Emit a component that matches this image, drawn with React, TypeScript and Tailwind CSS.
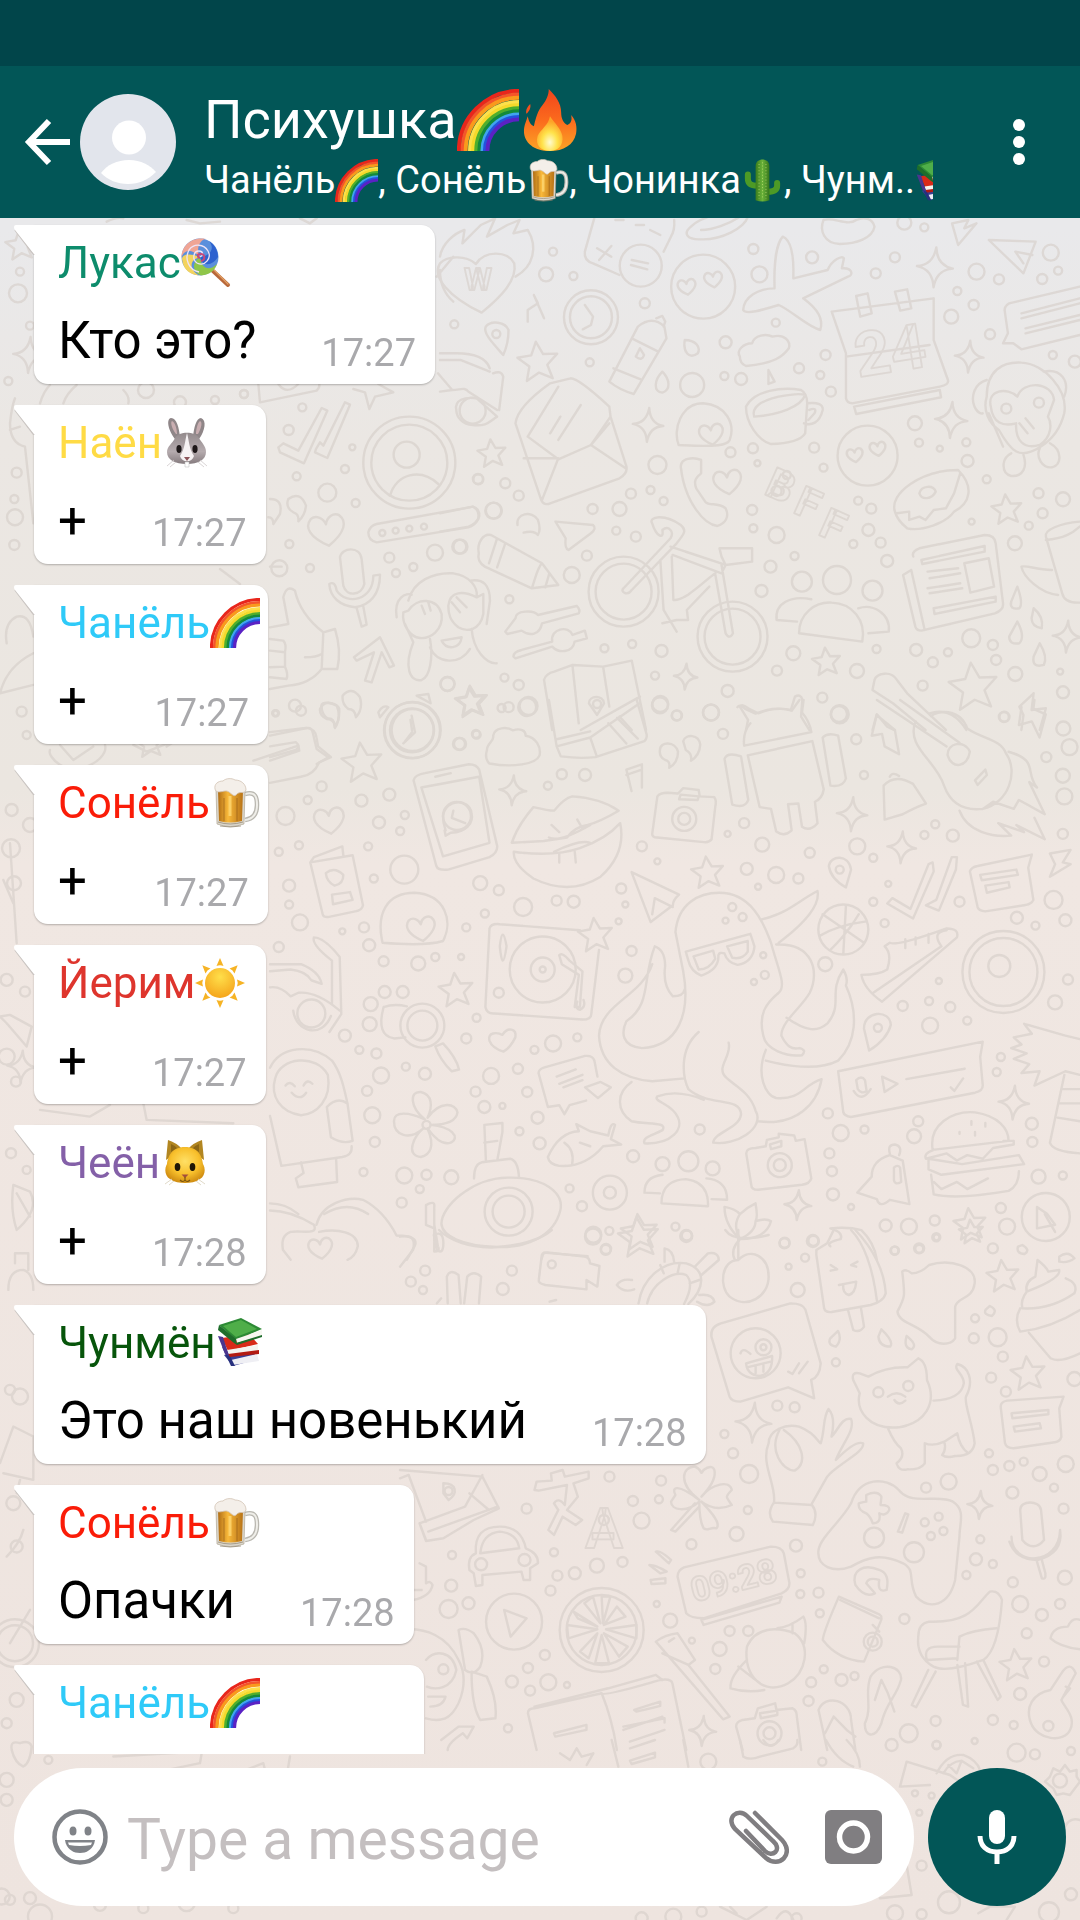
import type { ReactNode } from "react";

type EmojiName =
  | "rainbow"
  | "fire"
  | "beer"
  | "cactus"
  | "books"
  | "lollipop"
  | "rabbit"
  | "sun"
  | "cat";

interface Message {
  id: number;
  author: string;
  emoji: EmojiName;
  color: string;
  text: string;
  time: string;
  width?: string;
}

const messages: Message[] = [
  { id: 1, author: "Лукас", emoji: "lollipop", color: "text-[#0d8c6c]", text: "Кто это?", time: "17:27" },
  { id: 2, author: "Наён", emoji: "rabbit", color: "text-[#ffdb45]", text: "+", time: "17:27" },
  { id: 3, author: "Чанёль", emoji: "rainbow", color: "text-[#2fcaf8]", text: "+", time: "17:27" },
  { id: 4, author: "Сонёль", emoji: "beer", color: "text-[#fa1c08]", text: "+", time: "17:27" },
  { id: 5, author: "Йерим", emoji: "sun", color: "text-[#de352d]", text: "+", time: "17:27" },
  { id: 6, author: "Чеён", emoji: "cat", color: "text-[#8460a8]", text: "+", time: "17:28" },
  { id: 7, author: "Чунмён", emoji: "books", color: "text-[#07550b]", text: "Это наш новенький", time: "17:28" },
  { id: 8, author: "Сонёль", emoji: "beer", color: "text-[#fa1c08]", text: "Опачки", time: "17:28" },
  { id: 9, author: "Чанёль", emoji: "rainbow", color: "text-[#2fcaf8]", text: "", time: "", width: "w-[390px]" },
];

const rainbowBands = [
  ["#e8261c", 48.5],
  ["#f4552a", 45.5],
  ["#f99a1c", 43],
  ["#fde04a", 39.5],
  ["#f5d92b", 37],
  ["#4fae2c", 34.5],
  ["#138a3a", 32],
  ["#3fa4ee", 29.5],
  ["#2352dc", 27.5],
  ["#5a22c4", 25.5],
] as const;

const emojiArt: Record<EmojiName, ReactNode> = {
  rainbow: (
    <g fill="none" strokeWidth="3.2">
      {rainbowBands.map(([color, r]) => (
        <path key={color} stroke={color} d={`M${50 - r} 50A${r} ${r} 0 0 1 50 ${50 - r}`} />
      ))}
    </g>
  ),
  fire: (
    <>
      <path
        fill="url(#flame)"
        d="M24 0C29 5 34 11 34 19C34 24 36 28 39 29C42 28 43 25 42 21C46 25 47 31 46 36C44 45 36 50 25 50C12 50 4 43 4 34C4 29 6 26 7 22C8 26 9 29 12 30C14 22 15 18 19 13C22 9 24 5 24 0Z"
      />
      <path fill="#f4511e" d="M9 12C7 14 5 17 6 20C8 18 10 15 9 12Z" />
      <path
        fill="url(#flameCore)"
        d="M25 22C29 28 34 32 35 38C36 45 32 50 25 50C17 50 13 45 15 38C17 33 24 29 25 22Z"
      />
    </>
  ),
  beer: (
    <>
      <path
        d="M35 16C46 13 47 20 47 27C47 36 43 41 35 42"
        fill="none"
        stroke="#b9b7b0"
        strokeWidth="4.5"
      />
      <path
        d="M35 16C46 13 47 20 47 27C47 36 43 41 35 42"
        fill="none"
        stroke="#efeee9"
        strokeWidth="2"
      />
      <path fill="#dcd7cc" stroke="#a49a86" strokeWidth=".6" d="M6 12L7 46Q20 51 34 46L35 12Z" />
      <path fill="url(#lager)" d="M8 12L9 43Q20 46 32 43L33 12Z" />
      <path stroke="#ffd873" strokeWidth="3" d="M20 18V38" opacity=".8" />
      <path stroke="#7b4710" strokeWidth=".8" d="M14 20V43M27 20V43" opacity=".6" />
      <path
        fill="#f4efe9"
        stroke="#d2c3b4"
        strokeWidth=".8"
        d="M5 11C4 6 8 3 13 3C16 0 22 0 25 2C31 2 36 6 36 12C34 17 30 12 26 17C23 20 20 12 15 13C10 14 6 15 5 11Z"
      />
      <path stroke="#8d8069" strokeWidth=".7" fill="none" d="M8 44Q20 48 33 44M10 48Q20 50 31 48" />
    </>
  ),
  cactus: (
    <>
      <path
        d="M8 18V23C8 29 12 31 19 31M42 28V31C42 36 38 38 31 38"
        fill="none"
        stroke="#4d9a26"
        strokeWidth="7"
        strokeLinecap="round"
      />
      <path fill="url(#cactusBody)" d="M17 48V8C17 -2 33 -2 33 8V48Q25 51 17 48Z" />
      <path
        d="M21 6V46M25 4V47M29 6V46"
        fill="none"
        stroke="#bfdc73"
        strokeWidth="1"
        strokeDasharray="1 2.6"
      />
    </>
  ),
  books: (
    <>
      <path fill="#3a3f94" d="M8 37L34 30L42 41L17 48Z" />
      <path fill="#efeff4" d="M15 42L41 36L43 43L17 47Z" />
      <path fill="#27307e" d="M6 29L10 30L19 48L15 48Z" />
      <path fill="#d92a19" d="M6 20L33 16L42 26L12 33Z" />
      <path fill="#f5f3ef" d="M11 32L42 27V33L13 37Z" />
      <path fill="#b31b12" d="M12 36L43 32V36L14 39Z" />
      <path fill="#4b358f" d="M2 18L7 19L13 38L9 36Z" />
      <path fill="#2d8a35" d="M3 7L25 0L46 11L20 22Z" />
      <path fill="#4fae49" d="M7 8L25 2L41 11L20 19Z" />
      <path fill="#f7f7f1" d="M20 21L46 12V18L21 25Z" />
      <path fill="#1e6d2b" d="M3 7L20 21L21 27L18 25L2 12Z" />
      <path fill="#1e6d2b" d="M20 25L46 17V19L21 27Z" />
    </>
  ),
  lollipop: (
    <>
      <path stroke="#b8683a" strokeWidth="4" strokeLinecap="round" d="M32 33L47 47" />
      <path stroke="#e2a063" strokeWidth="1.2" strokeLinecap="round" d="M33 32L47 46" />
      <circle cx="19" cy="19" r="18.5" fill="#5b8fdc" />
      <path fill="#f0a595" d="M19 19C14 10 20 1 25 1C10 -2 0 9 .5 20C2 13 9 9 19 19Z" />
      <path fill="#f3d35e" d="M19 19C7 14 1 17 1 21C2 32 10 37 18 37.500C8 31 8 22 19 19Z" />
      <path fill="#8fc649" d="M19 19C10 25 12 34 20 37.500C29 37 34 32 36 26C28 34 20 30 19 19Z" />
      <path fill="#2d62cf" d="M19 19C22 30 32 27 37 19C37 12 33 6 28 3C34 10 30 18 19 19Z" />
      <path
        fill="none"
        stroke="#efe3f6"
        strokeWidth="1.300"
        d="M19 19C23 17 22 13 18 13C12 13 11 22 16 25C24 29 31 20 27 13C23 6 13 5 8 12C3 21 8 32 18 34"
      />
      <path fill="none" stroke="#c5487c" strokeWidth="2" d="M19 20C16 19 16 16 19 16C24 15 25 22 20 23" />
    </>
  ),
  rabbit: (
    <>
      <path fill="#8f8688" d="M13 21C6 12 4 1 9 0C15 0 17 10 18 19ZM31 19C32 10 34 0 39 0C45 2 43 13 37 21Z" />
      <path fill="#c9aeb1" d="M14 16C10 11 8 4 10 3C13 4 15 11 15 16ZM34 16C34 11 36 4 38 3C41 4 39 11 36 16Z" />
      <path
        fill="url(#fur)"
        d="M13 20C17 13 33 13 37 20C39 24 44 28 44 34C44 42 36 46 25 46C13 46 5 42 5 34C5 28 11 25 13 20Z"
      />
      <path fill="#f6f2f3" d="M25 15C23 22 23 31 18 38C20 45 30 45 32 38C27 31 27 22 25 15Z" />
      <ellipse cx="17" cy="31" rx="2.600" ry="4" fill="#1d1718" />
      <ellipse cx="33" cy="31" rx="2.600" ry="4" fill="#1d1718" />
      <path fill="#8b5459" d="M22 39H28L25 43Z" />
      <path fill="#fff" stroke="#bbb" strokeWidth=".5" d="M23 44H27V49H23Z" />
      <path stroke="#cfc9ca" strokeWidth=".8" d="M5 48L12 42M8 49L14 44M45 48L38 42M42 49L36 44" />
    </>
  ),
  sun: (
    <>
      <g fill="#f6b324">
        {[0, 45, 90, 135, 180, 225, 270, 315].map((angle) => (
          <path key={angle} d="M25 0L28.500 8Q25 6.500 21.500 8Z" transform={`rotate(${angle} 25 25)`} />
        ))}
      </g>
      <circle cx="25" cy="25" r="15" fill="url(#sunDisc)" />
    </>
  ),
  cat: (
    <>
      <path fill="#b28621" d="M6 22L8 2Q17 5 22 11ZM44 22L42 2Q33 5 28 11Z" />
      <path fill="#8d6714" d="M11 14L11 6Q16 8 18 11ZM39 14L39 6Q34 8 32 11Z" />
      <path
        fill="url(#catFace)"
        d="M25 9C38 9 42 18 43 26C46 31 45 38 40 41C36 44 30 45 25 45C20 45 14 44 10 41C5 38 4 31 7 26C8 18 12 9 25 9Z"
      />
      <ellipse cx="17.500" cy="29" rx="2.800" ry="4" fill="#1e1606" />
      <ellipse cx="32.500" cy="29" rx="2.800" ry="4" fill="#1e1606" />
      <path fill="#a34e3c" d="M21.500 36.500H28.500L25 40Z" />
      <path fill="none" stroke="#7a5510" strokeWidth="1.200" d="M25 39V42M20 42Q23 45 25 42Q27 45 30 42" />
      <path stroke="#ddd6c2" strokeWidth=".9" d="M5 46L12 41M9 47L14 43M45 46L38 41M41 47L36 43" />
    </>
  ),
};

function Emoji({ name, className }: { name: EmojiName; className: string }) {
  return (
    <svg viewBox="0 0 50 50" aria-hidden="true" className={`shrink-0 ${className}`}>
      {emojiArt[name]}
    </svg>
  );
}

function EmojiPaint() {
  return (
    <svg aria-hidden="true" className="absolute size-0">
      <defs>
        <linearGradient id="flame" x1="0" y1="0" x2="0" y2="1">
          <stop offset="0" stopColor="#f0441c" />
          <stop offset=".5" stopColor="#fb6a1d" />
          <stop offset="1" stopColor="#fba426" />
        </linearGradient>
        <radialGradient id="flameCore" cx=".5" cy=".75" r=".6">
          <stop offset="0" stopColor="#fffbd0" />
          <stop offset=".5" stopColor="#ffe24a" />
          <stop offset="1" stopColor="#fda328" />
        </radialGradient>
        <linearGradient id="lager">
          <stop offset="0" stopColor="#b06d14" />
          <stop offset=".4" stopColor="#f8b83a" />
          <stop offset="1" stopColor="#b87317" />
        </linearGradient>
        <linearGradient id="cactusBody">
          <stop offset="0" stopColor="#3b7d1d" />
          <stop offset=".5" stopColor="#6bb33a" />
          <stop offset="1" stopColor="#34751c" />
        </linearGradient>
        <linearGradient id="fur" x1="0" y1="0" x2="0" y2="1">
          <stop offset="0" stopColor="#938a8c" />
          <stop offset=".6" stopColor="#b5abae" />
          <stop offset="1" stopColor="#857b7e" />
        </linearGradient>
        <radialGradient id="sunDisc" cx=".5" cy=".3" r=".7">
          <stop offset="0" stopColor="#ffdf4a" />
          <stop offset="1" stopColor="#f5a51c" />
        </radialGradient>
        <radialGradient id="catFace" cx=".5" cy=".4" r=".6">
          <stop offset="0" stopColor="#ffe066" />
          <stop offset=".6" stopColor="#f8c02c" />
          <stop offset="1" stopColor="#d18e12" />
        </radialGradient>
      </defs>
    </svg>
  );
}

type Spot = [number, number, number];

interface DoodleSheet {
  x: number;
  y: number;
  sx: number;
  sy: number;
  // closed and open outlines, in the sheet's own units
  lines: string[];
  // x and y in sheet units, size in wallpaper units
  rings: Spot[];
  stars: Spot[];
  sparks: Spot[];
  hearts: Spot[];
}

const sheets: DoodleSheet[] = [
  {
    x: 440,
    y: 210,
    sx: 0.408,
    sy: 0.3333,
    lines: [
      "M0 160C-20 200 20 260 102 308C150 260 190 210 182 160C165 122 110 120 88 162C60 132 15 140 0 160Z",
      "M0 140C5 100 35 70 60 60L55 100L100 45L135 25L115 80L165 45L195 30L180 70L215 60C240 110 230 170 185 200",
      "M378 25L355 125Q352 152 375 160L440 195M574 30Q576 60 566 80L548 125M430 30H450M480 45H500M515 60L540 75M385 115L420 140M420 108L390 150",
      "M470 150L510 160M468 165L508 178",
      "M615 50C640 20 700 0 755 20C745 55 690 90 640 88C605 90 595 70 615 50ZM640 60C670 60 710 40 735 20",
      "M940 30C930 60 940 100 980 102C1020 102 1060 85 1065 50C1060 25 1040 20 1020 30C1000 50 965 20 940 30Z",
      "M840 80C860 90 868 130 866 205L950 180C960 150 985 135 990 145L985 175C1010 172 1015 195 1000 200L890 265C930 300 940 330 932 360C900 350 860 300 830 285C790 300 750 315 743 300C745 260 780 235 820 235C818 160 825 100 840 80Z",
      "M960 305L1210 265V390L1245 510Q1248 525 1225 530L1010 580Q998 580 995 565V430ZM1020 258L1048 250L1058 310L1030 320ZM1115 245L1145 238L1155 295L1128 302ZM995 440L1200 405M1015 590L1225 540L1228 562L1020 612Z",
      "M1345 90L1460 95L1430 190ZM1430 160L1410 125L1452 135",
      "M1568 230L1395 280Q1380 290 1385 310L1392 370L1380 400L1405 400L1425 418L1568 375M1425 310L1568 265M1425 325L1568 280M1435 355L1568 315M1435 370L1568 330",
      "M230 255L240 280L215 300V335M230 255L255 325",
      "M155 435C130 400 105 370 112 350C125 330 160 335 168 360Q168 400 155 435Z",
      "M355 285L375 320L370 345L350 358",
      "M415 515L485 350Q520 315 550 350L555 385L475 552Q440 540 415 515ZM425 475L495 510M470 385L535 425M530 325L545 318L552 335L548 350M490 415L480 440Q495 455 500 435Z",
      "M600 390C625 390 640 410 632 430C610 450 595 425 600 390ZM545 485C565 510 565 540 545 548C522 545 525 510 545 485ZM805 480L820 515L805 522Z",
      "M735 440C725 420 745 400 765 400C770 375 800 370 815 380C845 370 860 395 855 415C840 440 820 460 750 468Q735 460 735 440Z",
      "M0 430H40C90 430 115 450 122 475M0 450H50L122 485M-5 490L30 540C50 540 60 530 70 545L140 600M0 545L30 540M40 600C35 570 60 560 90 565L140 620C120 635 115 650 80 645C55 645 40 620 40 600ZM130 490Q150 480 155 500L145 600",
      "M185 640Q190 590 270 520L320 505Q340 505 415 590L418 620L457 770Q460 790 440 805L270 880Q255 888 248 870ZM290 530L215 680L290 748L370 705L418 620M205 745H290L250 870M290 748L370 705L455 775M345 585L290 690M295 620L270 670M415 640L370 705",
      "M585 705C570 660 590 580 645 580C700 585 725 640 710 690C705 705 680 712 585 705Z",
      "M750 590C770 540 840 530 885 540Q900 550 900 580L895 670Q880 700 810 702C780 690 750 640 750 590ZM770 620Q760 580 830 560Q880 548 895 555C885 590 830 615 770 620ZM900 580Q940 575 938 600C930 640 910 648 892 640M905 600Q925 590 918 610L903 630",
      "M590 770C590 745 620 740 640 750V790C630 800 620 810 628 835L650 875C660 890 680 875 700 895C710 920 700 940 680 948C650 945 600 880 590 770Z",
      "M1340 560C1340 480 1380 455 1425 458C1480 460 1540 540 1530 610C1520 660 1500 690 1470 712C1420 750 1400 725 1370 660C1345 640 1330 600 1340 560ZM1350 590C1340 540 1390 530 1415 560C1430 510 1500 515 1505 570L1490 620C1500 640 1500 680 1470 705C1430 720 1410 690 1412 640C1380 650 1355 640 1350 590ZM1340 510C1310 520 1300 560 1310 590C1320 615 1330 610 1330 610M1480 485C1520 475 1545 510 1530 560M1345 610L1380 710M1400 730C1375 745 1375 790 1400 798C1430 800 1440 770 1430 735M1470 715C1460 740 1475 775 1500 772C1525 765 1525 720 1495 700M1420 640L1440 670M1435 625L1455 655",
      "M1115 905C1100 850 1180 780 1270 780C1310 830 1300 880 1260 905C1240 940 1180 965 1145 955Q1120 930 1115 905ZM1120 910L1150 905V930L1175 920L1190 930L1210 900L1240 895L1260 850L1275 790M1175 850C1180 825 1210 825 1215 845C1205 870 1180 870 1175 850Z",
      "M283 935L375 945Q385 955 370 970L315 1020Q305 1015 308 985Z",
      "M190 945C185 910 225 900 240 930Q248 960 240 975Q230 960 205 968",
      "M0 910L80 890Q98 895 96 920Q90 940 70 950L0 965",
      "M95 1030C90 1000 105 970 125 975L250 1060L290 1125L225 1135L110 1070Q90 1055 95 1030ZM120 1060L140 985M140 1072L160 1000M225 1135C235 1100 240 1070 250 1060M268 1090L258 1132",
      "M520 940C510 920 550 910 590 945C605 960 600 970 580 1000L470 1140C460 1160 440 1145 450 1135L565 985C575 965 560 945 545 960C550 990 530 980 520 940ZM565 1010L700 1065L690 1090L570 1035M568 1040L572 1170C600 1175 650 1110 675 1090M540 1050L548 1200L580 1265M685 1015L765 1015V1055L700 1065L690 1040ZM690 1065L718 1270Q710 1290 700 1270L675 1095M660 1130L605 1200L608 1230L580 1230L545 1240",
      "M825 1230C820 1180 860 1155 910 1168M825 1230L875 1235M1025 1195C1060 1180 1105 1210 1100 1265L1050 1270M880 1270C880 1210 920 1175 960 1178C1010 1180 1045 1230 1035 1295Z",
      "M1160 1040Q1155 1025 1175 1015L1335 975Q1360 975 1362 1000L1380 1180Q1382 1200 1360 1210L1180 1262Q1168 1262 1165 1250L1135 1095L1155 1080M1180 1050L1335 1008V1025L1182 1062ZM1285 1060L1345 1045L1358 1130L1300 1148ZM1195 1085L1270 1075M1200 1105L1275 1090M1195 1135L1275 1120M1200 1150L1280 1135M1210 1195L1362 1160V1175L1212 1212ZM1155 1080L1188 1260",
      "M1568 935C1520 940 1480 960 1485 980L1525 1150Q1530 1180 1568 1178M1485 990C1530 985 1550 970 1568 950M1500 1080C1460 1080 1440 1065 1425 1070C1430 1100 1470 1150 1515 1155",
      "M1415 1130Q1430 1180 1420 1195Q1395 1200 1400 1175ZM1455 1195Q1480 1220 1475 1255Q1450 1250 1450 1225ZM1415 1235Q1435 1280 1420 1300Q1395 1305 1395 1280ZM1470 1300Q1490 1340 1480 1365Q1450 1375 1455 1340Z",
      "M160 1265L185 1225C185 1200 230 1200 240 1215L335 1188Q345 1200 340 1210L250 1240C245 1275 220 1280 200 1262L165 1272ZM180 1340Q180 1325 200 1320L275 1295C270 1255 315 1245 325 1275L355 1262L360 1285L330 1295C325 1330 290 1330 275 1310L185 1345Z",
      "M275 1560L255 1410Q260 1390 280 1385L325 1365L400 1370L470 1352L505 1560M325 1370L340 1540M400 1372L415 1490M365 1480C365 1455 400 1455 402 1480L385 1515ZM345 1560L490 1460M440 1520L470 1560",
      "M750 1560L755 1530L735 1490Q740 1480 755 1495L780 1510Q820 1490 860 1500L870 1460Q885 1450 888 1470L885 1520L905 1560",
      "M1065 1410C1070 1390 1105 1380 1120 1410L1145 1450L1240 1560M1065 1410L1060 1440L1110 1480L1190 1560M1060 1560L1070 1515L1115 1560M1200 1510C1240 1495 1270 1520 1290 1560",
      "M1455 1450L1420 1490L1430 1515L1425 1560M1455 1450L1450 1500L1485 1495L1470 1560",
      "M1270 105L1315 40L1285 55L1295 30L1255 40Z",
    ],
    rings: [
      [492, 167, 21], [645, 230, 32], [370, 322, 27], [370, 322, 21], [1048, 737, 30], [450, 1145, 35], [450, 1145, 28],
      [717, 1280, 35], [717, 1280, 28], [887, 1115, 10], [973, 1110, 14], [1060, 1142, 10], [618, 525, 12], [138, 372, 4],
      [80, 602, 13], [1388, 596, 5], [1468, 578, 5], [825, 843, 5], [850, 795, 4], [385, 1482, 4],
      [277, 125, 4], [260, 193, 7], [327, 198, 4], [768, 117, 5], [783, 193, 8], [912, 142, 6], [1115, 142, 5],
      [1068, 190, 5], [1138, 38, 7], [1187, 52, 4], [1315, 185, 8], [1370, 208, 5], [1497, 128, 8], [1515, 182, 4],
      [1476, 207, 5], [1268, 243, 4], [1308, 285, 5], [1253, 320, 7], [1348, 373, 5], [502, 280, 5], [35, 343, 4],
      [823, 338, 4], [700, 397, 6], [367, 457, 4], [697, 498, 4], [738, 507, 6], [945, 435, 5], [880, 475, 5],
      [932, 495, 4], [958, 545, 5], [1502, 435, 4], [1556, 455, 6], [1164, 640, 7], [1174, 698, 4], [1225, 716, 3],
      [1290, 697, 4], [1293, 753, 6], [1340, 808, 4], [917, 713, 5], [767, 715, 5], [712, 727, 5], [533, 765, 9],
      [778, 760, 3], [940, 773, 4], [93, 807, 5], [160, 820, 5], [193, 857, 5], [468, 851, 5], [516, 840, 4],
      [548, 873, 4], [440, 897, 7], [374, 897, 5], [132, 902, 8], [765, 900, 5], [768, 955, 4], [825, 975, 8],
      [1025, 872, 4], [1057, 896, 5], [1050, 960, 6], [1080, 998, 5], [1013, 1002, 4], [1096, 1053, 6], [432, 962, 4],
      [480, 980, 5], [360, 1037, 5], [50, 1010, 7], [323, 1095, 8], [170, 1168, 4], [869, 1038, 4], [810, 1070, 6],
      [788, 1143, 6], [1467, 850, 5], [1527, 868, 7], [1477, 910, 5], [1443, 947, 4], [1303, 935, 3], [1409, 1000, 7],
      [1302, 1285, 9], [1355, 1305, 5], [1363, 1350, 5], [1245, 1327, 4], [1167, 1320, 6], [1208, 1357, 5],
      [1070, 1317, 4], [1022, 1383, 7], [866, 1330, 7], [826, 1382, 5], [543, 1323, 6], [471, 1302, 4], [403, 1315, 4],
      [527, 1397, 4], [158, 1403, 4], [193, 1425, 5], [18, 1422, 7], [217, 1488, 9], [151, 1494, 4], [705, 1443, 6],
      [540, 1482, 8], [580, 1517, 5], [664, 1508, 8], [937, 1463, 5], [978, 1512, 8], [1183, 1427, 5], [1410, 1392, 7],
      [1520, 1385, 3], [1527, 1447, 6], [1382, 1521, 5],
    ],
    stars: [[240, 455, 20], [127, 730, 14], [1389, 898, 15], [947, 1355, 14], [1307, 1430, 24], [77, 1475, 16]],
    sparks: [[1213, 172, 20], [1297, 440, 16], [1253, 630, 18], [510, 645, 17], [1537, 1280, 16], [602, 1400, 13]],
    hearts: [[605, 230, 9], [670, 208, 9], [665, 672, 12], [705, 815, 14], [1017, 735, 8], [1073, 716, 8]],
  },
  {
    x: 270,
    y: 700,
    sx: 0.5165,
    sy: 0.357,
    lines: [
      "M0 90L70 78Q88 80 90 105L93 130L118 160L95 175Q85 210 60 215L0 232M0 130L50 118Q60 130 50 140L0 160",
      "M275 85L272 55M275 90L262 115",
      "M100 20C95 0 130 5 134 25Q135 60 125 75Q125 50 112 52Q100 40 100 20ZM755 140C755 115 785 115 790 145Q790 175 773 190Q775 170 765 168Q753 160 755 140ZM800 115C805 95 830 95 833 125Q832 155 815 170Q818 150 805 140Z",
      "M420 140C420 120 435 115 432 100C435 75 460 75 470 85C485 78 495 85 495 100C515 105 525 130 522 155C515 180 470 190 425 178Q415 165 420 140Z",
      "M540 0L555 130L563 158Q600 165 630 160L725 115Q732 105 728 90L710 0M555 130L620 105L715 10M555 110L620 88M620 105L632 155M655 65L690 122M672 50L712 108",
      "M905 20Q910 10 920 25L940 38Q980 15 1010 30L1025 0M930 65Q915 90 918 128L1048 90Q1045 60 1030 35L1033 0M925 155L1050 115L1072 250Q1070 275 1055 285L1060 345Q1045 370 1030 355L1023 290L1003 292L1010 365Q995 385 980 368L970 305L948 300ZM880 165Q885 145 912 158L926 280Q920 305 895 293ZM1070 105Q1080 90 1100 100L1115 220Q1110 245 1085 240Z",
      "M1175 0L1310 130M1220 0L1335 120M1175 40L1165 100L1185 95L1190 130L1218 152L1210 85L1195 75ZM1250 60C1230 130 1290 170 1305 240C1320 300 1350 310 1380 305C1430 290 1450 200 1425 150C1415 110 1380 110 1350 80C1335 20 1290 30 1280 45M1312 155C1310 120 1345 110 1355 145C1350 190 1320 195 1312 155ZM1365 225L1385 195L1388 210L1370 238ZM1430 145C1490 170 1460 200 1485 245L1470 230L1500 320L1450 280L1440 305L1400 285L1380 305M1335 310C1350 370 1400 385 1435 380L1410 345L1460 370L1445 350L1500 390L1480 330",
      "M1455 20L1450 70L1475 60L1490 105L1502 40L1478 25L1480 0",
      "M1190 335L1188 240Q1210 205 1245 235L1270 290Q1250 300 1225 320ZM1200 215Q1205 200 1218 213",
      "M278 225Q280 210 300 205L385 180Q400 180 405 195L440 410Q440 430 425 440L345 475Q325 478 322 465ZM293 245L405 215L425 400L335 438ZM338 365L340 380L350 372C380 370 395 345 390 315C385 275 340 275 335 325Q335 345 340 365M320 215L350 205M355 310L352 330L378 345",
      "M468 400Q480 350 510 300Q540 310 550 310Q570 275 585 270Q640 275 675 310Q640 340 615 350Q590 355 575 385L530 395ZM472 425Q550 440 600 415Q650 390 678 345Q690 430 640 495Q580 550 510 500Q470 460 472 425ZM545 350L560 370M595 335L605 360M560 430V455M590 425L592 455M540 385Q560 400 620 350M550 425Q600 390 620 400",
      "M740 375L750 270Q755 260 770 260L790 262L800 247L830 252L832 270L860 272Q865 280 862 300L855 390Q850 400 840 398L750 385Q740 385 740 375ZM795 265L830 270L828 280L792 278Z",
      "M690 195L720 180V245M690 195L700 255M690 210L720 195",
      "M78 455L160 435L180 575Q178 590 165 592L112 608Q103 608 102 600ZM78 455L85 440L140 410L142 435M120 545L155 538L160 560L122 572ZM108 485Q125 465 142 490Q142 515 125 520Q110 510 108 485Z",
      "M1355 480Q1358 468 1370 465L1475 433L1468 470L1478 560Q1475 572 1460 575L1385 592Q1372 590 1370 580ZM1375 490L1445 475L1448 490L1378 505ZM1385 520L1430 510L1432 525L1388 540Z",
      "M1195 570L1205 555L1240 585L1275 460L1283 455L1285 480L1245 612ZM1270 575L1290 560L1320 440L1330 440L1328 475L1295 590ZM1510 430L1550 420L1535 455L1550 460L1510 495L1520 460Z",
      "M700 482L792 545Q780 560 780 575L737 622ZM780 580L745 555L740 600",
      "M218 680C205 600 225 540 280 540C340 545 355 620 335 675Q300 690 218 680Z",
      "M425 640Q428 625 445 628L600 645M425 640L417 860Q420 880 435 878L605 895Q622 895 622 880L637 700M445 690Q450 625 458 690Q450 770 445 690ZM560 715Q565 705 580 730L605 760L600 860L590 860L598 770L565 740ZM595 845Q590 865 600 868Q612 860 607 840",
      "M785 650C790 570 830 540 870 540C930 540 955 620 970 680C985 760 1000 800 985 820C960 850 945 880 955 940C960 980 1000 1000 1030 995Q1040 980 1025 975C1010 980 1000 970 990 940C990 900 1030 860 1045 820C1065 760 1050 680 980 685M785 650L800 760C815 880 790 970 720 975C680 970 680 930 690 900C740 850 720 780 745 690Q765 700 765 745Q760 800 780 830Q800 830 803 810M740 740C720 830 640 850 637 940C640 1020 680 1060 740 1068L803 1060M1000 890C1040 930 1060 930 1080 905C1110 850 1080 820 1110 755Q1120 780 1115 800C1140 880 1135 960 1100 1010C1060 1040 1000 1025 960 1010M950 615C1000 600 1020 565 1060 535C1065 570 1040 620 985 680M960 980C940 1050 960 1110 980 1115C1030 1120 1030 1080 1068 1062C1060 1130 1020 1195 945 1180M830 930C790 980 800 1060 810 1090C850 1140 910 1110 912 1160C910 1200 860 1210 858 1240C900 1250 960 1200 940 1150C930 1100 900 1080 885 1060C860 1030 895 1000 888 960M700 1070C670 1100 670 1150 700 1180C730 1190 770 1180 760 1205C740 1220 720 1225 725 1242C780 1245 800 1200 790 1170C780 1130 740 1125 750 1110Q790 1090 840 1120",
      "M805 705L930 655L938 690Q935 735 905 742Q885 735 880 710Q870 705 868 715Q870 755 835 772Q815 760 810 730ZM820 718L858 702L862 725Q850 755 830 755ZM885 690L925 675L925 705Q915 728 895 722Z",
      "M1070 600L1150 680M1115 578L1110 710M1065 660Q1100 630 1155 620M1085 700Q1120 650 1140 600",
      "M1190 690L1200 680Q1215 690 1310 640Q1335 640 1330 665L1185 845Q1150 810 1145 770Q1180 770 1195 755Q1205 710 1190 690ZM1168 820L1300 690Q1280 650 1310 645M1230 695V670M1250 685V665M1275 680V655",
      "M1150 920C1150 870 1200 865 1202 910Q1195 950 1160 982ZM1082 465C1085 435 1120 430 1125 475L1115 525Q1085 500 1082 465Z",
      "M0 740H60Q95 760 100 795L80 785Q70 760 40 755L0 760M85 665Q105 665 135 720L138 880L115 930M85 665Q80 685 120 730V850M0 805Q20 800 40 830L55 820Q90 815 135 870M45 870C50 930 100 950 118 885",
      "M220 860Q240 850 265 858M220 860Q205 940 240 948L262 945M320 970L335 962Q360 1000 366 1035L352 1040Q330 1010 320 970Z",
      "M425 955C420 930 440 930 450 938C460 915 478 920 475 945Q465 975 452 985Q430 975 425 955Z",
      "M520 1045Q520 1035 530 1030L610 997Q625 995 628 1010L634 1055M520 1045L538 1140L560 1135L570 1160L580 1135L612 1122M555 1055L592 1035M560 1075L605 1050M568 1085L605 1065M610 1085L640 1070L660 1085L635 1115Z",
      "M1100 1040L1380 957L1375 1000L1380 1080Q1380 1095 1365 1100L1125 1168Q1112 1165 1110 1155ZM1185 1055L1215 1075L1190 1098ZM1232 1062L1345 1033M1135 1065Q1145 1050 1152 1065L1155 1095Q1145 1105 1138 1090ZM1130 1095Q1145 1130 1163 1090M1318 1085L1325 1095L1342 1060",
      "M1568 950L1540 940L1460 907L1475 935L1440 945L1455 965L1435 975L1465 990L1440 1005L1470 1020L1455 1045L1490 1040L1480 1080L1540 1040L1568 1050M1538 1050L1510 1240Q1515 1265 1568 1270M1535 1090H1568M1528 1130H1568M1525 1170L1568 1180",
      "M0 1030C20 970 80 960 120 1010C140 1050 145 1100 150 1130M10 1060C20 1000 90 990 112 1050C120 1120 90 1160 60 1163C20 1155 0 1110 10 1060ZM30 1080Q38 1065 48 1082M65 1080Q72 1060 82 1075M42 1100Q58 1125 70 1100M0 1165L22 1305L140 1280Q160 1275 158 1250M110 1140Q130 1110 150 1130L160 1235Q140 1245 118 1225ZM60 1295L65 1325L50 1340L55 1365L130 1350L128 1285",
      "M300 1175C270 1140 270 1095 292 1098C315 1105 315 1140 305 1170C330 1120 360 1130 363 1155C360 1185 330 1190 312 1190C350 1195 370 1225 350 1240C330 1250 310 1210 305 1200C320 1250 310 1275 292 1280C260 1275 280 1220 297 1200C270 1235 240 1220 240 1180C240 1150 270 1155 300 1175Z",
      "M415 1190L450 1185V1210L440 1290M415 1190L418 1290M395 1340Q395 1300 410 1295L465 1285Q480 1290 482 1335M415 1240L440 1235M332 1470C330 1420 390 1340 460 1338C530 1335 570 1380 562 1430C550 1500 500 1535 440 1532C370 1530 335 1500 332 1470ZM302 1415Q320 1400 318 1420L318 1470L325 1530Q330 1545 318 1545L318 1480L302 1470Z",
      "M538 1280Q560 1210 598 1208L593 1188L620 1208L655 1220Q660 1180 668 1190L660 1230L680 1245L645 1250Q610 1310 560 1305Q540 1300 538 1280ZM570 1240Q590 1260 585 1300M600 1240L620 1250",
      "M725 1380Q725 1335 760 1330M725 1380L755 1382M845 1340Q885 1345 885 1400L855 1398M758 1410Q758 1345 805 1342Q850 1350 848 1418Z",
      "M922 1270Q922 1255 940 1255L960 1250L962 1232L985 1225V1215L1015 1220L1018 1235L1035 1230L1048 1340Q1045 1355 1030 1358L945 1372Q932 1372 932 1360ZM968 1245L990 1235V1250L970 1258Z",
      "M1137 1380L1165 1335Q1165 1290 1200 1275L1225 1290L1238 1412L1200 1400Q1180 1425 1175 1398ZM1200 1270Q1195 1245 1210 1245Q1225 1250 1218 1275M1208 1310Q1215 1300 1220 1310L1222 1350Q1210 1360 1208 1345Z",
      "M1283 1260C1275 1190 1320 1150 1365 1155C1410 1165 1430 1200 1430 1235L1283 1260ZM1285 1260Q1265 1270 1270 1285L1310 1270L1330 1290L1350 1275L1380 1285L1400 1255L1440 1245V1235L1420 1235M1275 1285L1340 1300L1450 1275L1460 1300L1300 1330L1275 1315ZM1280 1330L1285 1385Q1330 1400 1430 1375Q1450 1360 1450 1320M1285 1350L1300 1370L1330 1350L1350 1370L1390 1340M1335 1210V1215M1358 1180V1190M1385 1185V1195M1365 1210V1220",
      "M0 1430Q40 1430 85 1470C95 1500 60 1485 40 1490Q20 1500 25 1540L40 1568M0 1410Q30 1410 55 1440M90 1470C100 1410 150 1390 180 1400Q220 1430 245 1500Q290 1500 280 1530L265 1568M105 1440Q150 1400 190 1440M95 1490C130 1480 170 1490 170 1530Q165 1560 150 1568",
      "M910 1510Q880 1470 880 1420Q900 1425 910 1440Q925 1420 940 1410Q945 1450 940 1460Q960 1450 970 1460Q960 1510 910 1510ZM910 1440Q895 1470 910 1510Q940 1490 940 1460M910 1510Q890 1540 900 1568",
      "M1085 1480Q1120 1475 1145 1485Q1170 1520 1175 1568M1085 1480Q1110 1490 1105 1510Q1075 1520 1085 1530",
      "M525 1568L530 1548L615 1558",
      "M1485 1480L1520 1470L1505 1440L1485 1420V1480M1500 1440L1520 1490",
    ],
    rings: [
      [275, 85, 28], [275, 85, 22], [362, 325, 14], [802, 333, 12], [802, 333, 6], [260, 475, 14], [528, 755, 33],
      [528, 755, 12], [528, 755, 3], [1110, 643, 25], [1420, 762, 41], [1420, 762, 34], [1412, 745, 11],
      [80, 878, 14], [295, 912, 22], [295, 912, 15], [222, 818, 6], [257, 818, 6], [195, 852, 7], [193, 908, 7],
      [462, 1433, 24], [462, 1433, 16], [303, 1190, 4], [658, 1380, 6], [658, 1380, 17], [760, 1300, 7], [810, 1292, 10],
      [857, 1312, 7], [987, 1303, 12], [987, 1303, 6], [1502, 1448, 24], [1103, 475, 4], [1177, 918, 4],
      [10, 37, 3], [60, 30, 5], [462, 20, 5], [498, 20, 9], [400, 97, 4], [366, 123, 6], [755, 15, 8], [788, 43, 5],
      [854, 35, 8], [877, 95, 5], [1103, 40, 9], [1135, 110, 5], [1150, 210, 4], [1422, 47, 5], [1536, 80, 7],
      [1548, 132, 8], [1503, 160, 5], [1535, 212, 7], [1538, 270, 8], [1535, 375, 5], [100, 242, 5], [73, 280, 4],
      [30, 325, 9], [177, 282, 6], [231, 265, 6], [211, 343, 6], [261, 322, 4], [252, 367, 4], [565, 208, 5],
      [610, 210, 6], [538, 240, 4], [918, 345, 5], [886, 375, 3], [953, 405, 7], [1045, 428, 5], [1137, 410, 8],
      [1168, 442, 4], [1288, 348, 4], [1322, 380, 6], [1267, 378, 4], [720, 410, 5], [750, 452, 3], [680, 528, 5],
      [923, 473, 6], [980, 490, 8], [1023, 500, 5], [945, 523, 3], [17, 425, 4], [56, 407, 4], [190, 410, 4],
      [37, 520, 6], [37, 573, 4], [201, 500, 4], [58, 623, 8], [407, 513, 7], [443, 533, 5], [490, 580, 9],
      [555, 562, 5], [588, 565, 6], [416, 598, 4], [380, 637, 4], [182, 637, 5], [140, 648, 3], [688, 573, 3],
      [675, 620, 3], [17, 692, 5], [192, 687, 6], [220, 732, 5], [320, 720, 4], [287, 738, 7], [370, 720, 3],
      [700, 703, 5], [688, 772, 7], [1075, 740, 7], [1190, 625, 4], [1168, 565, 4], [1197, 515, 3], [1335, 565, 5],
      [1446, 610, 6], [1482, 632, 4], [1517, 560, 9], [1540, 617, 6], [1295, 787, 3], [1225, 857, 5], [1276, 843, 4],
      [1317, 860, 5], [1350, 898, 4], [1278, 912, 8], [1520, 847, 7], [1545, 783, 5], [895, 580, 4], [915, 608, 4],
      [882, 618, 3], [955, 715, 3], [958, 770, 4], [937, 790, 3], [400, 890, 4], [443, 820, 5], [380, 948, 5],
      [145, 940, 6], [173, 980, 4], [206, 990, 5], [548, 962, 8], [595, 945, 4], [512, 980, 4], [263, 1027, 4],
      [300, 1047, 6], [215, 1052, 8], [428, 1053, 8], [480, 1033, 5], [498, 1098, 5], [188, 1095, 5], [398, 1097, 5],
      [415, 1140, 6], [450, 1137, 3], [518, 1170, 6], [198, 1163, 8], [203, 1238, 5], [483, 1208, 4], [522, 1242, 6],
      [832, 1203, 5], [703, 1278, 6], [1080, 1158, 5], [1105, 1213, 8], [1151, 1203, 4], [1255, 1180, 5],
      [1247, 1222, 7], [1083, 1270, 5], [1088, 1320, 5], [1090, 1385, 6], [1125, 1420, 3], [1415, 1000, 4],
      [1407, 1042, 4], [1475, 1187, 6], [1476, 1238, 5], [1488, 1335, 7], [1535, 1332, 4], [181, 1322, 4],
      [260, 1332, 8], [303, 1330, 5], [351, 1337, 7], [290, 1370, 4], [255, 1408, 5], [580, 1368, 4], [604, 1418, 5],
      [626, 1498, 8], [657, 1487, 4], [785, 1475, 4], [807, 1500, 5], [650, 1540, 5], [1192, 1472, 6],
      [1237, 1475, 8], [1287, 1458, 5], [1290, 1505, 4], [1415, 1423, 5], [1427, 1475, 8], [1052, 1515, 5],
      [996, 1522, 5], [1210, 1542, 4], [1257, 1537, 4],
    ],
    stars: [[388, 5, 14], [178, 175, 20], [847, 483, 16], [630, 658, 17], [360, 812, 17], [715, 1490, 18], [1355, 1468, 16]],
    sparks: [[470, 253, 15], [1127, 320, 17], [1223, 413, 16], [1440, 1128, 17], [1022, 1415, 15]],
    hearts: [[115, 337, 15], [293, 640, 14], [98, 1535, 12]],
  },
  {
    x: 400,
    y: 1230,
    sx: 0.4337,
    sy: 0.3333,
    lines: [
      "M90 0Q130 50 210 53Q310 45 350 0M78 15Q100 0 100 40Q100 75 85 60ZM0 20Q40 10 30 60L0 110",
      "M327 75Q330 66 345 68L425 80Q438 82 438 100L460 108L455 170L430 150V178L335 165Q318 160 320 150ZM110 220L108 140Q115 115 135 135L140 220M148 220L155 140Q170 120 187 140L182 220M85 220L95 205M345 215L360 210",
      "M550 220C560 140 610 90 660 100C710 120 700 180 665 222M570 220C580 160 630 120 660 135Q680 160 655 222M610 95V55Q630 60 632 95M680 110L710 70Q735 65 735 90L695 135M535 150Q510 145 500 165Q515 190 540 178M690 195Q720 190 725 215Q710 235 685 215M600 105L608 130M645 100L640 130M690 150L668 160",
      "M780 90C740 90 735 170 760 200C800 240 850 200 850 140C850 80 810 50 780 90ZM780 90V0M750 0Q770 40 850 15",
      "M960 75V60L985 40L1000 0M960 75L978 235Q980 248 995 246L1085 225Q1115 215 1120 190Q1115 90 1050 0M1040 0Q1085 60 1100 215M1033 240L1045 300Q1060 310 1070 290L1063 235M993 105L1008 118L993 122M1055 95L1040 105L1052 110M1012 165Q1030 160 1052 155Q1050 190 1035 195Q1020 190 1022 165",
      "M1158 125Q1165 115 1180 130Q1200 130 1220 105C1270 85 1330 110 1325 160C1320 210 1285 200 1280 230V325C1270 345 1240 350 1220 320C1190 280 1150 280 1147 245C1165 200 1165 200 1158 125Z",
      "M1470 90Q1490 110 1495 125L1520 120Q1525 145 1445 185Q1440 155 1465 140ZM1445 185Q1430 210 1435 235Q1500 240 1555 190Q1565 160 1535 145M1430 235Q1415 270 1430 305Q1500 295 1568 240M1450 308L1500 385Q1520 400 1568 370",
      "M718 320Q715 290 740 280L900 220Q930 220 935 240L970 400Q968 440 948 450L955 505L895 472L785 515Q765 515 760 500ZM785 370Q790 350 808 372M798 400L858 378Q860 430 830 438Q800 435 798 400ZM800 412L855 395M820 410V430M838 405V425M895 425L905 432L920 400M920 430L940 395",
      "M1045 450Q1040 425 1060 430L1080 440Q1120 410 1170 412L1195 385Q1215 395 1215 450C1240 520 1210 580 1150 592C1080 600 1050 540 1060 490ZM1125 595Q1140 640 1155 655Q1165 680 1145 700Q1150 725 1170 718Q1200 720 1210 700V640Q1230 650 1255 635Q1260 660 1250 675Q1260 685 1280 678Q1320 680 1325 640C1320 580 1300 520 1305 500C1325 450 1310 410 1285 402C1275 420 1300 430 1300 460C1295 500 1260 510 1230 512M1125 500Q1145 480 1165 500M1140 510Q1150 530 1165 512M1255 635L1285 610Q1290 650 1310 670",
      "M1385 530Q1385 515 1400 512L1530 500L1520 535L1525 620Q1522 635 1510 637L1415 655Q1398 655 1395 640ZM1410 550L1495 540V553L1412 565ZM1415 590L1475 580L1478 595L1418 605Z",
      "M850 640C850 600 890 580 920 590C960 610 965 640 970 640C980 600 975 560 988 537Q1005 560 995 620C1010 600 1020 560 1040 567C1050 600 1020 640 1005 690Q1050 630 1068 640C1070 670 1010 700 985 740L950 820M850 640C830 700 870 770 862 820M875 600C850 660 880 720 910 722C940 700 930 640 885 600M862 818L950 825Q965 850 952 885L860 875Q845 850 862 818Z",
      "M1040 820C1060 740 1120 740 1150 780C1180 830 1240 790 1275 815C1305 840 1290 880 1290 920L1280 1050C1265 1130 1220 1140 1190 1100C1170 1050 1190 1020 1160 1000C1110 970 1080 980 1040 1010C1000 1030 960 1010 965 960C970 920 1020 870 1040 820ZM1075 795Q1100 780 1110 800L1108 825Q1130 825 1128 840Q1120 860 1105 850Q1110 880 1090 880Q1085 860 1075 850Q1055 840 1058 820Q1070 815 1075 815ZM1148 905L1165 850L1172 853L1158 908Z",
      "M1430 840C1430 810 1475 810 1478 840L1485 930C1470 955 1450 955 1435 930ZM1410 920C1410 1010 1520 1010 1522 900M1405 935Q1420 990 1470 990Q1530 970 1522 900M1468 992L1480 1045Q1490 1050 1488 1030L1480 990",
      "M0 745L20 735L60 875M0 720L190 740L228 835L170 870L100 925L60 933L45 880L150 830L190 735M65 905L225 830M160 790L205 840M45 880L60 930M100 760C130 760 135 790 112 810L100 790Z",
      "M310 780L315 755L350 752L348 730L375 720L380 740L435 725V745L400 760L410 800L385 840L420 870L405 885L375 860L355 915L342 900L365 840L355 820Q365 800 380 825L385 765L320 782Z",
      "M185 970Q190 910 230 905Q270 910 275 955ZM175 970Q170 890 230 890Q280 890 290 955Q320 970 318 1000L300 1015V1050L285 1050L280 1025L190 1035V1065L175 1068L170 1030L160 1020Q155 980 175 970Z",
      "M240 1140L292 1165L255 1220Z",
      "M680 820L625 900L635 905L690 830M690 810C640 760 650 710 680 710C700 720 690 740 700 720C730 690 740 740 695 800C720 760 760 750 765 780C750 800 750 800 765 825C740 840 715 835 695 815C720 850 740 880 730 895C715 890 710 905 700 895C690 870 690 840 690 815C660 850 625 840 625 815L635 795C625 770 640 760 690 810Z",
      "M640 1040Q640 1020 655 1012L855 950Q880 950 885 970L898 1060Q898 1080 880 1090L700 1165Q670 1165 660 1150ZM695 1170L880 1100L875 1118L700 1185ZM590 965Q600 960 625 990L620 1000ZM575 1005Q590 1005 615 1025L600 1030ZM578 1050L612 1045V1060L580 1062Z",
      "M465 1100L485 1100L468 1180ZM445 1100L462 1180L425 1120ZM500 1130L470 1185L520 1160ZM545 1185L475 1198L545 1225ZM470 1210L525 1250L505 1280ZM465 1215L482 1300H450ZM455 1210L435 1285L415 1265ZM385 1185L455 1198L388 1225ZM400 1145L455 1190L410 1165Z",
      "M1012 1100L1100 1150Q1115 1155 1108 1175L1070 1295Q1010 1290 975 1230Q975 1210 1012 1100ZM1015 1110L1105 1165M1050 1065C1040 1020 1070 1000 1105 1020Q1130 1030 1122 1080Q1100 1090 1105 1050Q1080 1040 1075 1060L1095 1090Q1070 1105 1050 1065ZM1090 1185L1105 1205",
      "M1195 1220Q1195 1180 1220 1175C1320 1180 1330 1120 1360 1085Q1380 1080 1388 1110Q1380 1260 1345 1290Q1260 1330 1230 1310Q1190 1280 1195 1220ZM1285 1290L1290 1220Q1320 1200 1375 1195M1215 1290Q1205 1250 1240 1250L1290 1250M1215 1290L1285 1285M1218 1320L1180 1425L1190 1432L1235 1325M1285 1305L1298 1425L1310 1430L1303 1300M1330 1295L1378 1410L1385 1400L1345 1290",
      "M590 1235Q610 1215 640 1210L680 1290L665 1305L760 1460L745 1468ZM605 1270L665 1305M620 1235L632 1225",
      "M800 1250C820 1190 870 1190 910 1210C950 1250 935 1330 895 1360C840 1400 790 1340 800 1250ZM870 1195Q900 1190 930 1160Q940 1180 932 1240M800 1290Q760 1340 762 1375Q800 1390 840 1380M780 1310L830 1360M905 1180V1210",
      "M295 1450Q295 1435 310 1435L465 1390Q470 1400 600 1350Q625 1345 628 1360L660 1560M295 1450L315 1560M465 1390Q490 1470 500 1560M310 1430L480 1375L590 1335L605 1350M355 1510L430 1485V1500L358 1520ZM515 1500L605 1460M530 1535L610 1500M540 1440L600 1415V1428L545 1445ZM515 1490L610 1465V1478",
      "M775 1490Q775 1475 790 1470L818 1465L825 1435L865 1420L868 1440L905 1435Q915 1440 915 1460L925 1560M775 1490L790 1560M830 1450L870 1442V1455L832 1465Z",
      "M1085 1340C1110 1290 1160 1310 1155 1350C1145 1400 1120 1420 1110 1480C1095 1530 1070 1520 1072 1480C1090 1430 1070 1390 1085 1340ZM1110 1350L1095 1410M1110 1350L1125 1390L1140 1445M965 1440C980 1390 1040 1410 1040 1470L1050 1560M965 1440L985 1560M1000 1460L980 1510M1000 1460L1030 1500L1050 1520",
      "M1500 1380C1460 1390 1440 1430 1455 1480C1470 1530 1530 1540 1545 1500C1560 1460 1530 1430 1525 1410L1558 1330Q1545 1290 1525 1330ZM1535 1370L1545 1375L1530 1400",
      "M0 1200C60 1190 110 1220 135 1290C160 1350 140 1420 120 1450Q100 1480 60 1465M60 1290C80 1260 120 1260 130 1320C120 1380 80 1380 62 1370M135 1200Q150 1190 170 1210Q200 1260 185 1310Q170 1340 150 1320ZM165 1325L200 1340Q225 1410 220 1465L185 1470Q165 1430 165 1325M65 1400L105 1400Q100 1430 70 1430",
      "M95 1530L135 1490H170L155 1525L145 1510Q110 1540 110 1560",
      "M45 1000L60 1010V1060Q70 1050 75 1065Q70 1100 30 1110M30 1080H50",
      "M1435 45Q1455 60 1440 72Q1420 70 1425 50ZM1520 80Q1540 60 1555 85Q1540 100 1520 95ZM1360 228Q1380 240 1365 258Q1345 255 1350 240ZM1110 298Q1140 335 1130 350Q1105 350 1103 320ZM1168 318Q1195 345 1180 358Q1160 355 1168 318ZM1010 303Q1020 330 1005 350Q985 345 992 325Z",
      "M1568 1170Q1550 1160 1540 1190Q1505 1190 1500 1225Q1520 1250 1568 1258",
    ],
    rings: [
      [820, 370, 25], [838, 352, 8], [838, 352, 3], [1103, 487, 5], [1172, 468, 5], [350, 103, 4], [263, 1175, 28],
      [465, 1200, 42], [465, 1200, 35], [1093, 923, 10], [1185, 967, 10], [1210, 877, 4], [1242, 860, 4],
      [1224, 918, 4], [1253, 903, 4], [187, 1003, 6], [287, 990, 6], [1090, 1235, 9], [1090, 1235, 5],
      [852, 1510, 12], [852, 1510, 6], [1495, 1488, 5], [100, 1318, 5], [470, 870, 5], [112, 783, 4],
      [58, 122, 5], [25, 155, 5], [53, 180, 4], [258, 122, 5], [237, 177, 6], [445, 20, 8], [475, 57, 5], [660, 18, 6],
      [887, 38, 5], [952, 33, 6], [934, 83, 4], [896, 110, 3], [917, 180, 7], [1140, 62, 4], [1197, 55, 5],
      [1237, 22, 3], [1367, 55, 5], [1326, 265, 4], [1323, 325, 5], [1378, 322, 9], [1390, 380, 5], [1363, 443, 5],
      [1397, 485, 5], [1005, 397, 4], [1555, 447, 7], [870, 527, 5], [910, 532, 5], [748, 612, 4], [768, 670, 5],
      [805, 732, 9], [802, 840, 4], [483, 740, 5], [602, 752, 5], [537, 813, 5], [597, 808, 4], [557, 872, 8],
      [292, 836, 5], [776, 912, 7], [913, 947, 6], [672, 943, 5], [120, 975, 4], [355, 967, 4], [454, 1007, 7],
      [513, 996, 5], [403, 1030, 6], [363, 1037, 5], [118, 1067, 6], [347, 1082, 5], [112, 1137, 9], [158, 1120, 6],
      [592, 1122, 3], [623, 1172, 7], [924, 1030, 4], [923, 1092, 4], [965, 1088, 5], [968, 1150, 4], [1163, 1167, 5],
      [760, 1203, 5], [803, 1203, 5], [737, 1257, 7], [673, 1232, 3], [727, 1317, 5], [334, 1275, 5], [295, 1314, 5],
      [258, 1355, 6], [342, 1357, 8], [300, 1382, 5], [385, 1365, 3], [948, 1357, 5], [977, 1318, 4], [1018, 1350, 6],
      [1048, 1338, 4], [942, 1413, 5], [249, 1495, 4], [1358, 670, 4], [1367, 720, 5], [1405, 708, 5], [1438, 695, 4],
      [1475, 732, 7], [1535, 702, 8], [1508, 773, 4], [1412, 788, 6], [1265, 755, 8], [1213, 773, 5], [1338, 928, 4],
      [1530, 836, 5], [1328, 988, 6], [1367, 1002, 4], [1306, 1035, 4], [1413, 1057, 5], [1533, 1043, 7],
      [1430, 1122, 8], [1522, 1122, 5], [1480, 1155, 6], [1445, 1210, 5], [1485, 1295, 5], [1430, 1392, 6],
      [1367, 1470, 5], [1235, 1473, 5], [1173, 1510, 9], [1415, 1485, 4], [1325, 1533, 3], [1237, 1545, 4],
    ],
    stars: [[550, 22, 20], [1317, 5, 12], [1390, 138, 16], [1448, 430, 17], [1420, 1305, 16]],
    sparks: [[815, 578, 20], [1337, 825, 14], [698, 1503, 15]],
    hearts: [],
  },
  {
    x: 220,
    y: 384,
    sx: 0.3333,
    sy: 0.3333,
    lines: [
      "M115 0L120 55L290 20Q300 10 298 0M175 0Q200 35 235 0M400 15L435 25L448 75L465 38L520 25L475 0",
      "M175 190L190 178L235 200L305 72L322 80L252 238L180 205ZM288 195L300 175L310 185L375 55L390 62L322 222L285 205Z",
      "M510 335C530 270 600 250 655 300",
      "M445 445Q450 425 470 420L760 368Q780 380 775 405Q765 425 745 430L470 475Q445 470 445 445Z",
      "M150 345Q190 345 180 390L160 420Q160 400 145 400M205 345Q240 320 258 365Q255 395 235 412Q238 390 220 385Q195 370 205 345ZM300 975Q315 945 350 965Q365 1000 345 1032Q345 1005 320 1005Q298 995 300 975ZM368 935Q395 905 420 940Q430 975 408 1000Q405 975 385 975Q365 960 368 935Z",
      "M360 520C365 490 420 485 425 525L433 600C425 635 380 640 370 605ZM328 600Q345 590 350 620C380 665 460 650 460 575L480 572C480 630 450 665 405 670C360 665 330 640 328 600ZM410 672L425 728L440 722L430 668",
      "M150 730L205 720L190 640Q200 600 225 620Q240 690 310 745L305 855Q270 900 205 905L150 915M150 765L190 770Q200 780 195 805L150 800M150 850L195 848Q205 870 200 885L150 880M195 805V850M310 745L345 735Q365 800 352 855L310 855M255 820Q290 820 305 810",
      "M402 820L480 760L522 845L508 850L485 805L455 895L435 890L462 805L410 830Z",
      "M565 650C580 590 640 565 700 568C750 575 775 610 770 640M565 680C590 640 650 640 665 690C670 740 630 765 600 762C570 760 545 720 550 685ZM605 665L615 690M625 655L632 680M685 665C690 620 730 620 770 640L790 630L790 690C780 740 740 745 715 730C690 710 685 690 685 665ZM710 640L740 670M695 655L720 685M530 700C520 640 560 625 575 632M750 590Q810 580 810 650L800 720M555 720L580 775C550 850 570 895 605 888C630 880 640 820 630 765M755 735C760 800 800 840 830 838M630 790C650 840 720 845 750 795M665 770L725 760C720 795 680 800 665 770Z",
      "M575 995L585 1045L550 1078",
      "M590 935L625 930L632 958ZM475 985Q490 960 505 970L480 1000Z",
      "M150 1055L260 1032Q275 1030 278 1045L290 1095L325 1120L290 1140M100 1130L235 1085L238 1100L150 1130",
      "M150 548L185 548M0 555L60 600",
    ],
    rings: [
      [568, 236, 46], [568, 236, 38], [560, 212, 13], [578, 1038, 28], [578, 1038, 21], [487, 447, 3], [527, 440, 3],
      [568, 434, 3], [612, 428, 3], [72, 30, 4], [247, 70, 4], [206, 138, 5], [397, 190, 3], [375, 255, 4],
      [230, 277, 4], [322, 326, 9], [407, 357, 4], [775, 286, 5], [820, 380, 8], [208, 480, 4], [178, 553, 8],
      [270, 552, 4], [508, 521, 5], [645, 506, 8], [718, 488, 7], [580, 549, 4], [528, 567, 4], [683, 900, 7],
      [168, 988, 3], [225, 965, 6], [768, 1050, 4], [720, 1080, 6],
    ],
    stars: [[755, 953, 15]],
    sparks: [],
    hearts: [[320, 437, 18]],
  },
  {
    x: 0,
    y: 210,
    sx: 0.3333,
    sy: 0.3333,
    lines: [
      "M45 565Q35 590 30 640Q30 700 75 710L100 940M60 600L85 650M120 580Q130 545 150 525M190 580Q200 550 230 525M370 540Q390 560 385 580M30 660L60 650M320 35Q350 20 370 25M560 30L600 40L660 35M900 25L930 40L950 25",
      "M1360 140L1310 200M1360 275Q1320 240 1320 180",
      "M20 1300Q10 1240 50 1220Q90 1210 100 1280M0 1450Q20 1370 100 1330M0 1450L100 1425",
      "M150 1620C140 1640 200 1700 260 1670C310 1650 320 1620 315 1605M180 1605L220 1650L280 1610M400 1605L440 1625L530 1590L500 1610",
      "M30 1900L50 2200M40 2080L10 2010M0 2420L30 2415L95 2450L80 2510L20 2440ZM120 2700L270 2720L330 2685M430 2680L440 2730L700 2740",
      "M40 2925L90 2945Q120 3000 50 3060Q30 3000 40 2925ZM50 2950L90 3020M25 3240Q25 3180 70 3180Q100 3190 100 3240M45 3160V3130H85V3180",
      "M0 3760L40 3650L100 3680V3810L10 3790M60 3810L50 3850M20 4040Q60 4000 70 3960M30 4300L90 4200",
      "M35 4620Q30 4590 60 4600Q90 4590 95 4610Q90 4660 70 4670Q45 4660 35 4620Z",
      "M100 4920L130 4850L230 4870M300 4680L310 4720L600 4660L605 4630M340 4640L600 4625M660 4710L790 4660L800 4700M860 4700L870 4640",
    ],
    rings: [
      [54, 250, 9], [60, 185, 4], [90, 347, 4], [25, 513, 4], [438, 540, 8], [540, 577, 6], [645, 570, 4], [732, 552, 4],
      [50, 788, 5], [43, 867, 4], [45, 922, 8], [43, 1005, 5], [65, 1505, 5], [80, 1575, 4], [35, 1800, 6],
      [90, 1845, 7], [33, 1915, 9], [42, 2020, 7], [20, 2310, 6], [75, 2345, 5], [20, 2540, 8], [48, 2615, 5],
      [33, 2830, 5], [80, 2880, 4], [30, 3540, 5], [60, 3560, 8], [40, 3880, 7], [50, 4010, 6], [45, 4300, 18],
      [45, 4300, 24], [50, 4470, 7], [20, 4540, 5], [20, 4710, 7], [145, 4650, 4], [20, 4770, 6], [30, 5070, 5],
      [90, 5065, 6], [5, 5060, 8], [120, 5120, 12], [300, 5085, 6], [430, 5095, 5], [560, 5080, 8], [700, 5095, 5],
    ],
    stars: [[62, 105, 15], [450, 1600, 14]],
    sparks: [[88, 435, 18], [65, 2570, 16]],
    hearts: [],
  },
  {
    x: 560,
    y: 1740,
    sx: 0.3333,
    sy: 0.3333,
    lines: [
      "M155 0L175 80M210 25L285 0M210 62L285 38L285 52L215 72ZM370 0L385 80M540 0L550 50Q570 62 600 50L700 25Q715 15 712 0M610 0Q635 35 655 0M798 0Q830 60 880 80M860 0Q900 40 900 80",
      "M1040 65L1170 105L1235 150M1040 65L1020 140L1110 135M1130 100Q1160 40 1210 45Q1250 60 1260 90M1150 100Q1170 65 1205 62L1240 85M1190 100L1205 62M1190 100L1165 75",
      "M1480 85L1500 95L1515 75L1530 95L1550 90V110L1560 125L1545 145L1530 165L1510 160L1490 165L1480 145L1455 125L1470 110ZM1560 240Q1530 230 1515 260M1040 375L1055 465L960 475",
      "M480 500L560 540L620 500M530 520L510 500M1255 520L1290 500H1365L1340 540M650 535Q680 490 700 540",
      "M0 40L30 60L50 25L65 50L100 40L80 75",
    ],
    rings: [
      [445, 65, 8], [425, 515, 5], [787, 65, 4], [995, 15, 6], [1130, 15, 4], [1065, 160, 3], [1115, 167, 3],
      [1078, 218, 3], [1370, 38, 9], [1425, 43, 5], [1533, 33, 4], [1500, 122, 7], [1167, 487, 11], [1005, 520, 8],
      [1085, 523, 5], [1467, 517, 10], [1533, 463, 6], [1085, 377, 5], [245, 535, 6], [710, 535, 5], [340, 530, 8],
    ],
    stars: [],
    sparks: [],
    hearts: [],
  },
];

const starPath =
  "M0 -10L3 -3.500L10 -3L4.500 2L6.500 9L0 5.500L-6.500 9L-4.500 2L-10 -3L-3 -3.500Z";
const sparkPath = "M0 -10Q1 -1 9 0Q1 1 0 10Q-1 1 -9 0Q-1 -1 0 -10Z";
const heartPath = "M0 9C-10 3 -12 -3 -8 -7C-5 -9 -1 -7 0 -3C1 -7 5 -9 8 -7C12 -3 10 3 0 9Z";

function Stamps({ sheet, spots, d, tilt }: { sheet: DoodleSheet; spots: Spot[]; d: string; tilt: number }) {
  return spots.map(([x, y, size]) => (
    <path
      key={`${x}-${y}`}
      d={d}
      vectorEffect="non-scaling-stroke"
      transform={`translate(${sheet.x + x * sheet.sx} ${sheet.y + y * sheet.sy}) rotate(${tilt}) scale(${size / 10})`}
    />
  ));
}

function Wallpaper() {
  return (
    <svg
      viewBox="0 0 1080 1920"
      preserveAspectRatio="xMidYMin slice"
      aria-hidden="true"
      className="absolute inset-0 size-full"
    >
      <g fill="none" stroke="#d5cec8" strokeWidth="2.400" strokeLinejoin="round" strokeLinecap="round" opacity=".62">
        {sheets.map((sheet) => (
          <g key={`${sheet.x}-${sheet.y}`}>
            <g transform={`translate(${sheet.x} ${sheet.y}) scale(${sheet.sx} ${sheet.sy})`}>
              {sheet.lines.map((d) => (
                <path key={d} d={d} vectorEffect="non-scaling-stroke" />
              ))}
            </g>
            {sheet.rings.map(([x, y, r]) => (
              <circle key={`${x}-${y}-${r}`} cx={sheet.x + x * sheet.sx} cy={sheet.y + y * sheet.sy} r={r} />
            ))}
            <Stamps sheet={sheet} spots={sheet.stars} d={starPath} tilt={-6} />
            <Stamps sheet={sheet} spots={sheet.sparks} d={sparkPath} tilt={4} />
            <Stamps sheet={sheet} spots={sheet.hearts} d={heartPath} tilt={-8} />
          </g>
        ))}
        <g fontFamily="Roboto" fontWeight="700" strokeWidth="1.800" textAnchor="middle">
          <text x="890" y="372" fontSize="62" transform="rotate(-9 890 350)">24</text>
          <text x="478" y="290" fontSize="32">W</text>
          <text x="780" y="500" fontSize="42" transform="rotate(24 780 488)">B</text>
          <text x="808" y="518" fontSize="42" transform="rotate(24 808 504)">F</text>
          <text x="833" y="540" fontSize="42" transform="rotate(24 833 526)">F</text>
          <text x="604" y="1548" fontSize="56">A</text>
          <text x="734" y="1592" fontSize="34" transform="rotate(-14 734 1582)">09:28</text>
        </g>
      </g>
    </svg>
  );
}

function Header() {
  return (
    <header className="relative flex h-[152px] shrink-0 items-center bg-[#025657] pr-9 pl-5 text-white">
      <button type="button" aria-label="Back" className="flex h-24 w-[60px] items-center">
        <svg viewBox="0 0 56 56" className="size-14" fill="none" stroke="currentColor" strokeWidth="6">
          <path d="M29 7L9 28L29 49M9 28H50" />
        </svg>
      </button>
      <svg viewBox="0 0 96 96" className="size-24 shrink-0" aria-hidden="true">
        <circle cx="48" cy="48" r="48" fill="#e2e5ec" />
        <circle cx="49" cy="43.500" r="17" fill="#fff" />
        <path fill="#fff" d="M21 79C27 71 37 66 49 66S70 71 76 78C68 86 59 90 48 90S28 86 21 79Z" />
      </svg>
      <div className="ml-7 w-[729px] min-w-0 pt-3">
        <h1 className="flex h-16 items-center text-[54px] leading-16">
          Психушка
          <Emoji name="rainbow" className="size-[62px]" />
          <Emoji name="fire" className="size-[62px]" />
        </h1>
        <p className="flex h-14 items-center overflow-hidden text-[38px] leading-14 whitespace-pre">
          Чанёль
          <Emoji name="rainbow" className="size-[43px]" />
          {", Сонёль"}
          <Emoji name="beer" className="size-[43px]" />
          {", Чонинка"}
          <Emoji name="cactus" className="size-[43px]" />
          {", Чунм.."}
          <Emoji name="books" className="size-[43px]" />
        </p>
      </div>
      <button type="button" aria-label="Menu" className="ml-auto flex h-24 w-[50px] items-center justify-center">
        <svg viewBox="0 0 12 46" className="h-[46px] w-3" fill="currentColor">
          <circle cx="6" cy="6" r="6" />
          <circle cx="6" cy="23" r="6" />
          <circle cx="6" cy="40" r="6" />
        </svg>
      </button>
    </header>
  );
}

function Bubble({ message }: { message: Message }) {
  return (
    <li
      className={`relative rounded-[14px] rounded-tl-none bg-white pt-2 pb-[11px] shadow-[0_1px_2px_rgba(0,0,0,0.25)] ${
        message.width ?? "w-fit"
      }`}
    >
      <svg viewBox="0 0 21 30" aria-hidden="true" className="absolute top-0 -left-5 h-[30px] w-[21px]">
        <path d="M1 5L20 30" stroke="#c9c4c1" strokeWidth="1.500" />
        <path d="M21 0H2Q0 0 0 2Q0 4 1 5L20 29H21Z" fill="#fff" />
      </svg>
      <div className={`flex h-[60px] items-center pr-2 pl-6 text-[44px] ${message.color}`}>
        {message.author}
        <Emoji name={message.emoji} className="size-[50px]" />
      </div>
      <div className="mt-4 flex h-16 items-end pr-[19px] pl-6">
        <p className="text-[51px] leading-16 text-black">{message.text}</p>
        <time className="ml-auto pl-[65px] text-[38px] leading-10 text-[#a9a9ac]">{message.time}</time>
      </div>
    </li>
  );
}

function Composer() {
  return (
    <form className="relative flex h-[166px] shrink-0 gap-[14px] p-[14px]">
      <div className="flex min-w-0 flex-1 items-center rounded-full bg-white pr-8 pl-[38px]">
        <button type="button" aria-label="Emoji" className="mr-[19px] shrink-0 text-[#808388]">
          <svg viewBox="0 0 56 56" className="size-14">
            <circle cx="28" cy="28" r="25.500" fill="none" stroke="currentColor" strokeWidth="4.500" />
            <ellipse cx="21" cy="22" rx="3.500" ry="4.500" fill="currentColor" />
            <ellipse cx="36" cy="22" rx="3.500" ry="4.500" fill="currentColor" />
            <path fill="currentColor" d="M13 31H43C42 39 36 44 28 44S14 39 13 31Z" />
            <path fill="#fff" d="M16 33.500H40L39 36Q28 38 17 36Z" />
          </svg>
        </button>
        <input
          type="text"
          aria-label="Type a message"
          placeholder="Type a message"
          className="h-24 min-w-0 flex-1 bg-transparent pt-1 text-[57px] text-black outline-none placeholder:text-[#c4bfc0]"
        />
        <button type="button" aria-label="Attach" className="mr-9 shrink-0 text-[#807e81]">
          <svg
            viewBox="0 0 60 56"
            className="h-14 w-[60px]"
            fill="none"
            stroke="currentColor"
            strokeWidth="4.500"
            strokeLinecap="round"
          >
            <path d="M26 4L53 31C66 45 50 60 37 49L6 20C-4 9 9 -2 18 7L44 32C54 41 43 49 36 42L17 22" />
          </svg>
        </button>
        <button type="button" aria-label="Camera" className="shrink-0 text-[#807e81]">
          <svg viewBox="0 0 57 54" className="h-[54px] w-[57px]">
            <rect width="57" height="54" rx="6" fill="currentColor" />
            <circle cx="28.500" cy="27" r="14" fill="none" stroke="#fff" strokeWidth="5.500" />
          </svg>
        </button>
      </div>
      <button
        type="button"
        aria-label="Voice message"
        className="flex size-[138px] shrink-0 items-center justify-center rounded-full bg-[#025657] text-white"
      >
        <svg viewBox="0 0 40 54" className="h-[54px] w-10">
          <rect x="12" y="0" width="16" height="34" rx="8" fill="currentColor" />
          <path
            d="M3 26C3 36 10 42 20 42S37 36 37 26M20 42V54"
            fill="none"
            stroke="currentColor"
            strokeWidth="5"
          />
        </svg>
      </button>
    </form>
  );
}

export default function App() {
  return (
    <div className="relative flex h-screen flex-col overflow-hidden bg-[linear-gradient(to_bottom,#e9e9eb_12%,#ebe7e3_23%,#ebe6e0_41%,#f0e7e2_45%,#eee4df_100%)] font-[Roboto,sans-serif]">
      <EmojiPaint />
      <Wallpaper />
      <div className="relative h-[66px] shrink-0 bg-[#01454a]" />
      <Header />
      <main className="relative min-h-0 flex-1 overflow-hidden">
        <ul className="flex flex-col gap-[21px] pt-[7px] pl-[34px]">
          {messages.map((message) => (
            <Bubble key={message.id} message={message} />
          ))}
        </ul>
      </main>
      <Composer />
    </div>
  );
}
